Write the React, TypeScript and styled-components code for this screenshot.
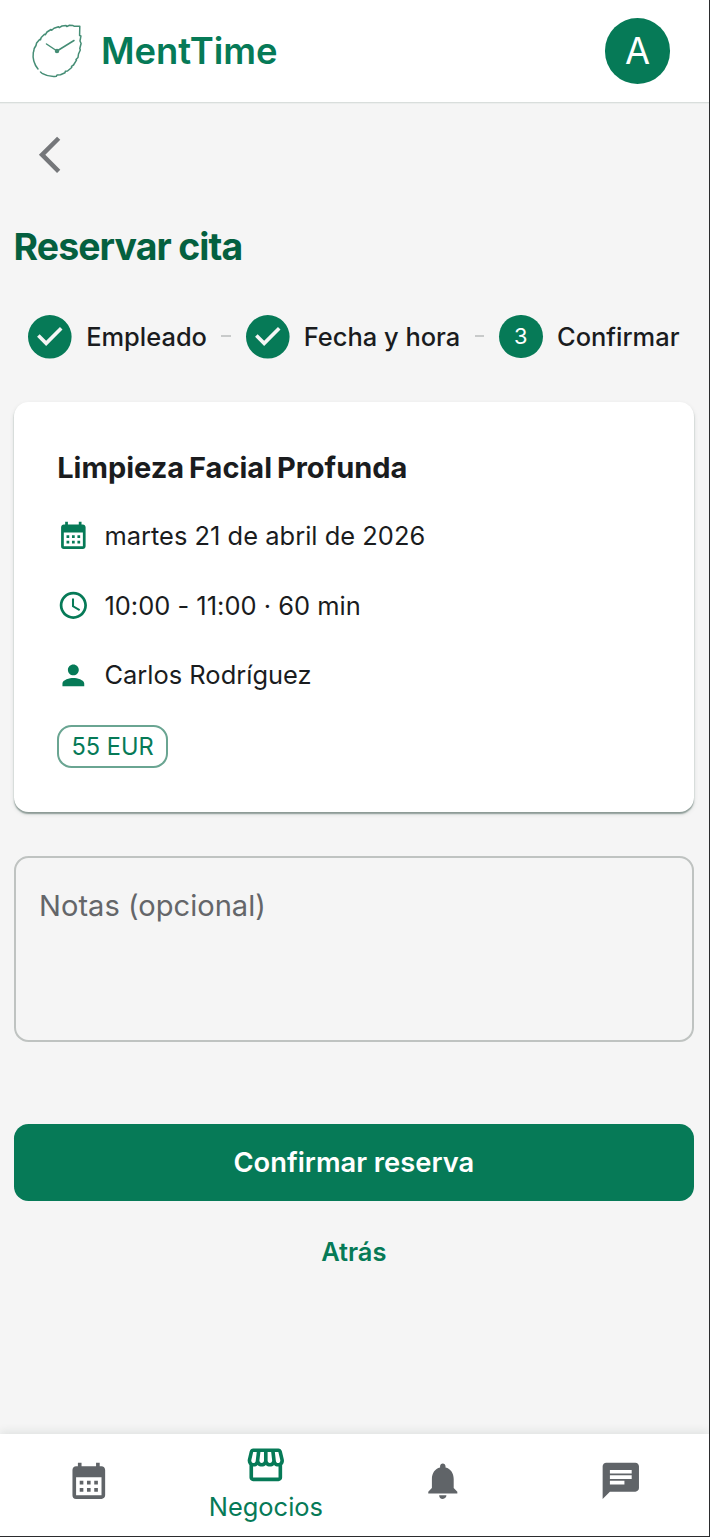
import React from "react";
import styled, { createGlobalStyle } from "styled-components";
import {
  MdAccessTime,
  MdCalendarMonth,
  MdChat,
  MdNotifications,
  MdOutlineStorefront,
  MdPerson,
} from "react-icons/md";

const green = "#067a57";
const ink = "#1a1c1e";

const GlobalStyle = createGlobalStyle`
  *, *::before, *::after { box-sizing: border-box; }
  body { margin: 0; background: #f5f5f5; }
  button, textarea { font: inherit; }
  svg { flex: none; overflow: visible; }
`;

const Screen = styled.div`
  display: flex;
  flex-direction: column;
  width: 710px;
  height: 1537px;
  overflow: hidden;
  background: #f5f5f5;
  border-right: 1px solid #2b2c2e;
  border-bottom: 1px solid #2b2c2e;
  font-family: Inter, "Liberation Sans", sans-serif;
  color: ${ink};
`;

const Header = styled.header`
  display: flex;
  align-items: center;
  flex: none;
  height: 103px;
  padding: 0 38.6px 0 29px;
  background: #fff;
  border-bottom: 1px solid #d9dedc;
  box-shadow: 0 1px 0 #eceeed;
`;

const Brand = styled.span`
  flex: 1;
  margin-left: 14px;
  font-size: 36.4px;
  font-weight: 600;
  line-height: 58px;
  letter-spacing: -0.04px;
  color: ${green};
`;

const Avatar = styled.div`
  display: flex;
  align-items: center;
  justify-content: center;
  width: 65.5px;
  height: 65.5px;
  border-radius: 50%;
  background: ${green};
  color: #fff;
  font-size: 36.4px;
  line-height: 1;
`;

const Main = styled.main`
  display: flex;
  flex-direction: column;
  flex: 1;
  padding: 30px 15px 0 13.6px;
`;

const BackButton = styled.button`
  display: flex;
  align-self: flex-start;
  margin-left: 14.4px;
  padding: 0;
  border: 0;
  background: none;
  color: #75777a;
`;

const Title = styled.h1`
  margin: 44px 0 0;
  font-size: 37.4px;
  font-weight: 650;
  line-height: 52px;
  letter-spacing: -0.9px;
  word-spacing: -0.5px;
  color: #04603f;
`;

const Stepper = styled.ol`
  display: flex;
  align-items: center;
  gap: 14.5px;
  margin: 42px 0 0;
  padding: 0 14.5px;
  list-style: none;
`;

const Step = styled.li`
  display: flex;
  align-items: center;
  gap: 14.5px;
  font-size: 25.45px;
  font-weight: 500;
  line-height: 36px;
  white-space: nowrap;
`;

const StepLabel = styled.span`
  padding-top: 1.5px;
`;

const Connector = styled.li`
  flex: 1;
  height: 2px;
  background: #c8caca;
`;

const StepNumber = styled.span`
  display: flex;
  align-items: center;
  justify-content: center;
  width: 43.6px;
  height: 43.6px;
  border-radius: 50%;
  background: ${green};
  color: #fff;
  font-size: 21.8px;
  font-weight: 400;
`;

const Card = styled.section`
  display: flex;
  flex-direction: column;
  align-items: flex-start;
  height: 410px;
  margin-top: 44px;
  padding: 44.8px 43.6px 0;
  border-radius: 14.5px;
  background: #fff;
  box-shadow: 0 2px 1.5px rgba(20, 50, 40, 0.42), 0 2px 5px rgba(20, 50, 40, 0.1);
`;

const CardTitle = styled.h2`
  margin: 0 0 26.8px;
  font-size: 29px;
  font-weight: 680;
  line-height: 42px;
  letter-spacing: 0;
  word-spacing: -2px;
`;

const Detail = styled.div`
  display: flex;
  flex: none;
  align-items: center;
  gap: 14.5px;
  height: 40px;
  margin-bottom: 29.6px;
  font-size: 25.45px;
  letter-spacing: 0.02px;
  svg { color: ${green}; }
`;

const Price = styled.span`
  display: flex;
  flex: none;
  align-items: center;
  height: 43.6px;
  padding: 0 12.2px;
  border: 2px solid #6aa592;
  border-radius: 14.5px;
  color: ${green};
  font-size: 23.6px;
`;

const Notes = styled.textarea`
  display: block;
  height: 186px;
  margin-top: 43.4px;
  padding: 29px 23.5px;
  border: 2px solid #bfc3c1;
  border-radius: 14.5px;
  outline: 0;
  resize: none;
  background: transparent;
  font-size: 29.1px;
  line-height: 38px;
  &::placeholder { color: #646669; opacity: 1; }
`;

const PrimaryButton = styled.button`
  height: 77px;
  margin-top: 82px;
  padding: 0;
  border: 0;
  border-radius: 14.5px;
  background: ${green};
  color: #fff;
  font-size: 27.3px;
  font-weight: 600;
`;

const TextButton = styled.button`
  align-self: center;
  height: 66px;
  margin-top: 17.5px;
  padding: 0 14px;
  border: 0;
  background: none;
  color: ${green};
  font-size: 25.45px;
  font-weight: 600;
`;

const BottomNav = styled.nav`
  display: flex;
  flex: none;
  height: 102px;
  background: #fff;
  box-shadow: 0 -2px 9px rgba(20, 50, 40, 0.1);
`;

const NavItem = styled.a<{ $active?: boolean }>`
  display: flex;
  flex: 1;
  flex-direction: column;
  align-items: center;
  justify-content: center;
  padding-bottom: ${(p) => (p.$active ? "0" : "9px")};
  color: ${(p) => (p.$active ? green : "#606468")};
  font-size: 25.45px;
  line-height: 40px;
`;

const MintLogo = () => (
  <svg width="58" height="58" viewBox="0 0 58 58" fill="none" stroke="#458d75" strokeWidth="1.5" strokeLinecap="round" strokeLinejoin="round">
    <path d="M9 47C5 42 3.5 36 4.3 30.5L4.8 29L5.2 26.5L7 23.5L7.6 21L10.6 17.5L11.5 17.8L12.2 15.5L15.5 12.3L16.4 12.7L18 10L22 7.5L22.7 8.2L25 6.2L29.5 4.7L30.2 5.6L33 4L37 3.5L37.8 4.5L40.5 3.3L44 3.6L45 4.2L50.8 4.2L50.6 13.5L51.9 14L51 19L52.1 21.5L50.8 26.5L51.3 28L49.5 32L49 35.5L47 37.5L47.5 38.2L44.5 43L42.5 44.3L42.7 45.5L38.5 49L36.3 49.3L36 50.8L31.5 52.8L28 53L27.3 54.3C22 55 17 53.5 13 51.3L11.5 50" />
    <path d="M17.5 22L28 29L45 18.5" />
    <circle cx="28" cy="29" r="1.5" fill="#458d75" />
  </svg>
);

const BackIcon = () => (
  <svg width="43.6" height="43.6" viewBox="0 0 24 24" fill="currentColor">
    <path d="M17.77 3.77 16 2 6 12l10 10 1.77-1.77L9.54 12z" />
  </svg>
);

const StepDone = () => (
  <svg width="43.6" height="43.6" viewBox="0 0 24 24" fill={green}>
    <path d="M12 0a12 12 0 1 0 0 24 12 12 0 0 0 0-24zm-2 17l-5-5 1.4-1.4 3.6 3.6 7.6-7.6L19 8l-9 9z" />
  </svg>
);

export default function App() {
  return (
    <>
      <GlobalStyle />
      <Screen>
        <Header>
          <MintLogo />
          <Brand>MentTime</Brand>
          <Avatar>A</Avatar>
        </Header>
        <Main>
          <BackButton aria-label="Volver">
            <BackIcon />
          </BackButton>
          <Title>Reservar cita</Title>
          <Stepper>
            <Step><StepDone /><StepLabel>Empleado</StepLabel></Step>
            <Connector />
            <Step><StepDone /><StepLabel>Fecha y hora</StepLabel></Step>
            <Connector />
            <Step><StepNumber>3</StepNumber><StepLabel>Confirmar</StepLabel></Step>
          </Stepper>
          <Card>
            <CardTitle>Limpieza Facial Profunda</CardTitle>
            <Detail><MdCalendarMonth size={32.7} />martes 21 de abril de 2026</Detail>
            <Detail><MdAccessTime size={32.7} />10:00 - 11:00 · 60 min</Detail>
            <Detail><MdPerson size={32.7} />Carlos Rodríguez</Detail>
            <Price>55 EUR</Price>
          </Card>
          <Notes placeholder="Notas (opcional)" />
          <PrimaryButton>Confirmar reserva</PrimaryButton>
          <TextButton>Atrás</TextButton>
        </Main>
        <BottomNav>
          <NavItem><MdCalendarMonth size={43.6} /></NavItem>
          <NavItem $active><MdOutlineStorefront size={43.6} />Negocios</NavItem>
          <NavItem><MdNotifications size={43.6} /></NavItem>
          <NavItem><MdChat size={43.6} /></NavItem>
        </BottomNav>
      </Screen>
    </>
  );
}
